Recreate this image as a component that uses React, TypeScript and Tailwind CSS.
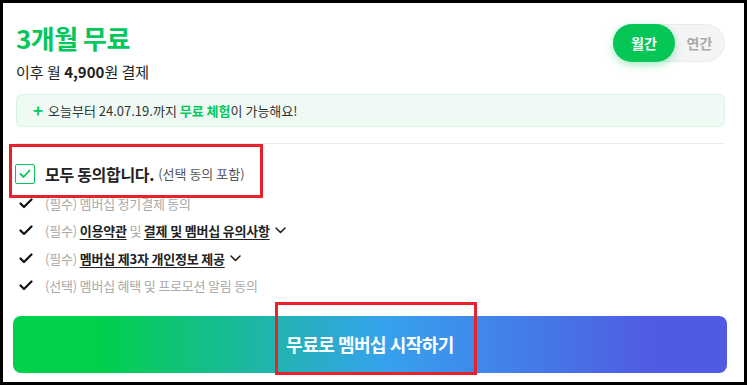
import React from "react";

const font = { fontFamily: '"Noto Sans CJK KR", "Noto Sans", sans-serif' };

function Check() {
  return (
    <svg width="14" height="11" viewBox="0 0 14 11" className="shrink-0">
      <path d="M1.5 5.5 L5 9 L12.5 1.5" fill="none" stroke="#111" strokeWidth="2.2" strokeLinecap="round" strokeLinejoin="round" />
    </svg>
  );
}

function Chevron() {
  return (
    <svg width="11" height="7" viewBox="0 0 11 7" className="ml-[5px] shrink-0">
      <path d="M1 1 L5.5 5.5 L10 1" fill="none" stroke="#222" strokeWidth="1.6" strokeLinecap="round" strokeLinejoin="round" />
    </svg>
  );
}

export default function App() {
  return (
    <div className="w-[747px] h-[385px] bg-black p-[3px] relative" style={font}>
      <div className="w-[741px] h-[379px] bg-white flex flex-col pl-[13px] pr-[19px]">
        <div className="flex justify-between items-start pt-[19px]">
          <div className="flex flex-col">
            <div className="text-[26px] leading-[32px] font-bold text-[#03c75a] tracking-[-0.5px]">3개월 무료</div>
            <div className="mt-[8px] text-[15px] leading-[20px] text-[#222]">
              이후 월 <span className="font-bold">4,900</span>원 결제
            </div>
          </div>
          <div className="mt-[2px] flex items-center w-[112px] h-[38px] rounded-full bg-[#f4f4f5] border border-[#ebebeb]">
            <div className="-ml-px w-[62px] h-[38px] rounded-full bg-[#06c755] shadow-[0_3px_8px_rgba(3,199,90,0.35)] flex items-center justify-center text-white text-[14px] font-bold">
              월간
            </div>
            <div className="flex-1 flex items-center justify-center text-[#aaa] text-[14px] font-bold">연간</div>
          </div>
        </div>

        <div className="mt-[12px] h-[33px] rounded-[6px] bg-[#f0faf4] border border-[#d6f5e2] flex items-center pl-[16px] text-[13px] text-[#333]">
          <span className="text-[#03c75a] font-bold text-[17px] leading-none mr-[5px] -mt-[2px]">+</span>
          오늘부터 24.07.19.까지&nbsp;<span className="text-[#03c75a] font-bold">무료 체험</span>이 가능해요!
        </div>

        <div className="mt-[16px] h-px bg-[#ececec]" />

        <div className="mt-[20px] h-[20px] flex items-center">
          <div className="w-[20px] h-[20px] -ml-px border-[1.5px] border-[#03c75a] rounded-[2px] flex items-center justify-center">
            <svg width="12" height="10" viewBox="0 0 12 10">
              <path d="M1.5 5 L4.5 8 L10.5 1.5" fill="none" stroke="#03c75a" strokeWidth="1.8" strokeLinecap="round" strokeLinejoin="round" />
            </svg>
          </div>
          <span className="ml-[10px] text-[16px] font-bold text-[#222] tracking-[-0.3px]">모두 동의합니다.</span>
          <span className="ml-[4px] text-[13px] text-[#555]">(선택 동의 포함)</span>
        </div>

        <div className="mt-[5.5px] flex flex-col text-[13px] tracking-[-0.2px]">
          <div className="h-[27.5px] flex items-center pl-[3px]">
            <Check />
            <span className="ml-[12px] text-[#aaa]">(필수) 멤버십 정기결제 동의</span>
          </div>
          <div className="h-[27.5px] flex items-center pl-[3px]">
            <Check />
            <span className="ml-[12px] text-[#aaa]">(필수)&nbsp;</span>
            <span className="font-bold text-[#222] underline underline-offset-[3px]">이용약관</span>
            <span className="text-[#aaa]">&nbsp;및&nbsp;</span>
            <span className="font-bold text-[#222] underline underline-offset-[3px]">결제 및 멤버십 유의사항</span>
            <Chevron />
          </div>
          <div className="h-[27.5px] flex items-center pl-[3px]">
            <Check />
            <span className="ml-[12px] text-[#aaa]">(필수)&nbsp;</span>
            <span className="font-bold text-[#222] underline underline-offset-[3px]">멤버십 제3자 개인정보 제공</span>
            <Chevron />
          </div>
          <div className="h-[27.5px] flex items-center pl-[3px]">
            <Check />
            <span className="ml-[12px] text-[#aaa]">(선택) 멤버십 혜택 및 프로모션 알림 동의</span>
          </div>
        </div>

        <div className="mt-[16.5px] -ml-[3px] -mr-[2px] h-[57px] rounded-[8px] bg-[linear-gradient(to_right,#00d04a_12%,#36a2ee_52%,#505ae2_90%)] flex items-center justify-center">
          <span className="text-white text-[18px] font-bold tracking-[-0.5px]">무료로 멤버십 시작하기</span>
        </div>
      </div>

      <div className="absolute left-[9px] top-[144px] w-[254px] h-[54px] border-[3px] border-[#e8212b]" />
      <div className="absolute left-[275px] top-[302px] w-[202px] h-[73px] border-[3px] border-[#e8212b]" />
    </div>
  );
}
